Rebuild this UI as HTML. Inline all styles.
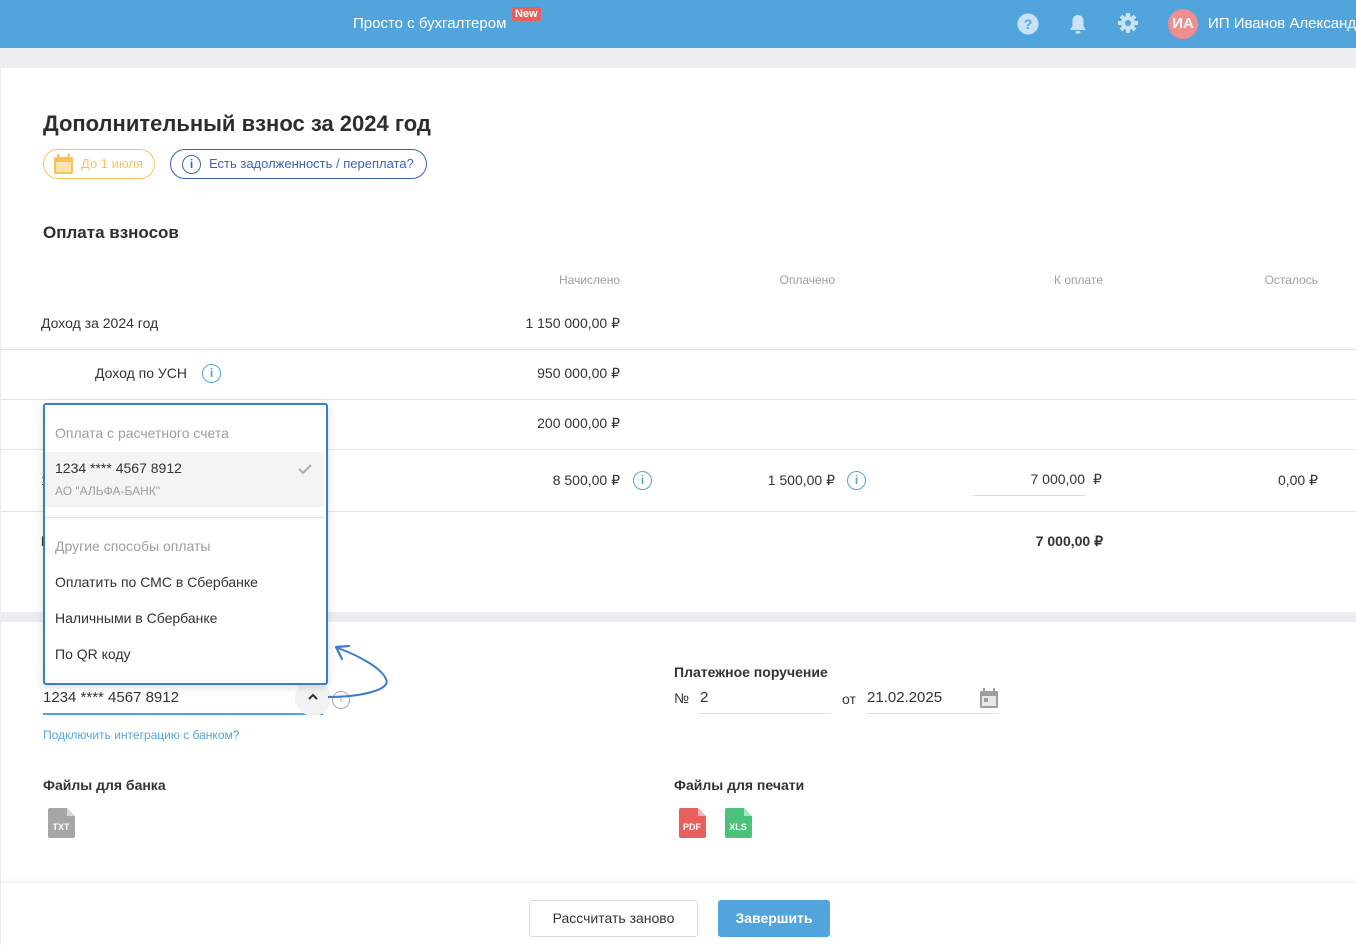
<!DOCTYPE html>
<html><head><meta charset="utf-8"><style>
*{box-sizing:border-box;margin:0;padding:0}
body{width:1356px;height:945px;overflow:hidden;background:#ebeef1;font-family:"Liberation Sans",sans-serif;color:#333;position:relative;font-size:14px}
.a{position:absolute;white-space:nowrap}
.hdr{position:absolute;left:0;top:0;width:1356px;height:48px;background:#52a5dc}
.panel{position:absolute;left:1px;background:#fff;width:1355px}
.line{position:absolute;left:1px;width:1355px;height:1px;background:#e2e2e2}
.r{text-align:right}
.th{color:#9e9e9e;font-size:12px}
.info{position:absolute;width:19px;height:19px;border:1.6px solid #52a5dc;border-radius:50%;color:#52a5dc;font-size:12px;font-weight:bold;text-align:center;line-height:16px}
.lbl{font-weight:bold;font-size:14px;color:#333}
</style></head><body>
<div class="hdr"></div>
<div class="a" style="left:353px;top:15px;color:#fff;font-size:15px">Просто с бухгалтером</div>
<div class="a" style="left:512px;top:7px;background:#e8605c;color:#fff;font-size:11px;padding:1px 3px;border-radius:2px;font-weight:bold">New</div>
<svg class="a" style="left:1017px;top:13px" width="22" height="22" viewBox="0 0 22 22"><circle cx="11" cy="11" r="10.5" fill="#c9e3f6"/><text x="11" y="16" fill="#52a5dc" font-size="14" font-weight="bold" text-anchor="middle" font-family="Liberation Sans">?</text></svg>
<svg class="a" style="left:1068px;top:13px" width="20" height="22" viewBox="0 0 20 22"><path d="M10 2c-3.5 0-5.5 2.5-5.5 6v5L2.5 16v1h15v-1l-2-3V8c0-3.5-2-6-5.5-6z" fill="#c9e3f6"/><rect x="7.5" y="18" width="5" height="2.5" rx="1.2" fill="#c9e3f6"/></svg>
<svg class="a" style="left:1117px;top:12px" width="22" height="22" viewBox="0 0 22 22"><g fill="#c9e3f6"><circle cx="11" cy="11" r="7"/><g stroke="#c9e3f6" stroke-width="4"><path d="M11 1v20M1 11h20M4 4l14 14M18 4L4 18"/></g></g><circle cx="11" cy="11" r="3" fill="#52a5dc"/></svg>
<div class="a" style="left:1168px;top:9px;width:30px;height:30px;border-radius:50%;background:#ef8d8f;color:#fff;font-weight:bold;font-size:15px;text-align:center;line-height:30px">ИА</div>
<div class="a" style="left:1208px;top:15px;color:#fff;font-size:15px">ИП Иванов Александр</div>

<div class="panel" style="top:68px;height:544px"></div>
<div class="panel" style="top:622px;height:260px"></div>
<div class="panel" style="top:882px;height:63px;box-shadow:0 -3px 6px rgba(0,0,0,0.04);border-top:1px solid #f0f0f0"></div>

<div class="a" style="left:43px;top:111px;font-size:22px;font-weight:bold;color:#2d2d2d">Дополнительный взнос за 2024 год</div>
<div class="a" style="left:43px;top:149px;width:112px;height:30px;border:1px solid #fbc25a;border-radius:15px"></div>
<svg class="a" style="left:54px;top:154px" width="19" height="20" viewBox="0 0 19 20"><rect x="0" y="3" width="19" height="17" rx="1.5" fill="#fbc25a"/><rect x="3" y="0" width="2.5" height="4" fill="#fbc25a"/><rect x="13.5" y="0" width="2.5" height="4" fill="#fbc25a"/><rect x="2" y="8" width="15" height="10" fill="#fde3ae"/></svg>
<div class="a" style="left:81px;top:156px;color:#fbc25a;font-size:13px">До 1 июля</div>
<div class="a" style="left:170px;top:149px;width:257px;height:30px;border:1px solid #3c63b8;border-radius:15px"></div>
<div class="info" style="left:182px;top:155px;border-color:#3c63b8;color:#3c63b8">i</div>
<div class="a" style="left:209px;top:156px;color:#3c63b8;font-size:13px">Есть задолженность / переплата?</div>

<div class="a" style="left:43px;top:223px;font-size:17px;font-weight:bold;color:#2d2d2d">Оплата взносов</div>
<div class="a th r" style="left:420px;width:200px;top:273px">Начислено</div>
<div class="a th r" style="left:635px;width:200px;top:273px">Оплачено</div>
<div class="a th r" style="left:903px;width:200px;top:273px">К оплате</div>
<div class="a th r" style="left:1118px;width:200px;top:273px">Осталось</div>

<div class="a" style="left:41px;top:315px">Доход за 2024 год</div>
<div class="a r" style="left:420px;width:200px;top:315px">1 150 000,00 ₽</div>
<div class="line" style="top:349px"></div>
<div class="a" style="left:95px;top:365px">Доход по УСН</div>
<div class="info" style="left:202px;top:364px">i</div>
<div class="a r" style="left:420px;width:200px;top:365px">950 000,00 ₽</div>
<div class="line" style="top:399px"></div>
<div class="a r" style="left:420px;width:200px;top:415px">200 000,00 ₽</div>
<div class="line" style="top:449px"></div>
<div class="a" style="left:41px;top:472px">1%</div>
<div class="a r" style="left:420px;width:200px;top:472px">8 500,00 ₽</div>
<div class="info" style="left:633px;top:471px">i</div>
<div class="a r" style="left:635px;width:200px;top:472px">1 500,00 ₽</div>
<div class="info" style="left:847px;top:471px">i</div>
<div class="a r" style="left:885px;width:200px;top:471px">7 000,00</div>
<div class="a" style="left:1093px;top:471px">₽</div>
<div class="a" style="left:973px;top:495px;width:112px;height:1px;background:#ddd"></div>
<div class="a r" style="left:1118px;width:200px;top:472px">0,00 ₽</div>
<div class="line" style="top:511px"></div>
<div class="a" style="left:41px;top:533px;font-weight:bold">Итого</div>
<div class="a r" style="left:903px;width:200px;top:533px;font-weight:bold">7 000,00 ₽</div>

<div class="a" style="left:43px;top:689px;font-size:15px">1234 **** 4567 8912</div>
<div class="a" style="left:43px;top:713px;width:280px;height:2px;background:#52a5dc"></div>
<div class="a" style="left:295px;top:680px;width:36px;height:36px;border-radius:50%;background:#f2f2f2"></div>
<svg class="a" style="left:307px;top:693px" width="12" height="8" viewBox="0 0 12 8"><path d="M2 6l4-4 4 4" stroke="#333" stroke-width="2" fill="none"/></svg>
<div class="a" style="left:332px;top:691px;width:18px;height:18px;border:1.5px solid #aaa;border-radius:50%;color:#aaa;font-size:11px;text-align:center;line-height:15px">i</div>
<svg class="a" style="left:320px;top:635px" width="80" height="70" viewBox="0 0 80 70"><path d="M8 62C40 62 72 55 66 44C62 34 42 22 18 13" stroke="#3d7cc9" stroke-width="2" fill="none"/><path d="M16 12L29 11M16 12L22 24" stroke="#3d7cc9" stroke-width="2.2" fill="none" stroke-linecap="round"/></svg>
<div class="a" style="left:43px;top:728px;color:#52a5dc;font-size:12px">Подключить интеграцию с банком?</div>

<div class="a lbl" style="left:674px;top:664px">Платежное поручение</div>
<div class="a" style="left:674px;top:690px">№</div>
<div class="a" style="left:700px;top:689px;font-size:15px">2</div>
<div class="a" style="left:699px;top:713px;width:132px;height:1px;background:#ddd"></div>
<div class="a" style="left:842px;top:691px">от</div>
<div class="a" style="left:867px;top:689px;font-size:15px">21.02.2025</div>
<div class="a" style="left:867px;top:713px;width:132px;height:1px;background:#ddd"></div>
<svg class="a" style="left:980px;top:688px" width="18" height="20" viewBox="0 0 18 20"><rect x="0" y="3" width="18" height="17" rx="1.5" fill="#9e9e9e"/><rect x="3" y="0" width="2" height="4" fill="#9e9e9e"/><rect x="13" y="0" width="2" height="4" fill="#9e9e9e"/><rect x="2" y="8" width="14" height="10" fill="#e8e8e8"/><rect x="4" y="10" width="4" height="4" fill="#9e9e9e"/></svg>

<div class="a lbl" style="left:43px;top:777px">Файлы для банка</div>
<div class="a lbl" style="left:674px;top:777px">Файлы для печати</div>
<svg class="a" style="left:48px;top:808px" width="27" height="30" viewBox="0 0 27 30"><path d="M2 0h17l8 8v20a2 2 0 0 1-2 2H2a2 2 0 0 1-2-2V2a2 2 0 0 1 2-2z" fill="#a6a6a6"/><path d="M19 0l8 8h-8z" fill="#d8d8d8"/><text x="13" y="22" fill="#fff" font-size="9" font-weight="bold" text-anchor="middle" font-family="Liberation Sans">TXT</text></svg>
<svg class="a" style="left:679px;top:808px" width="27" height="30" viewBox="0 0 27 30"><path d="M2 0h17l8 8v20a2 2 0 0 1-2 2H2a2 2 0 0 1-2-2V2a2 2 0 0 1 2-2z" fill="#e8605c"/><path d="M19 0l8 8h-8z" fill="#f5b3b1"/><text x="13" y="22" fill="#fff" font-size="9" font-weight="bold" text-anchor="middle" font-family="Liberation Sans">PDF</text></svg>
<svg class="a" style="left:725px;top:808px" width="27" height="30" viewBox="0 0 27 30"><path d="M2 0h17l8 8v20a2 2 0 0 1-2 2H2a2 2 0 0 1-2-2V2a2 2 0 0 1 2-2z" fill="#4bc27a"/><path d="M19 0l8 8h-8z" fill="#a9e5c0"/><text x="13" y="22" fill="#fff" font-size="9" font-weight="bold" text-anchor="middle" font-family="Liberation Sans">XLS</text></svg>

<div class="a" style="left:529px;top:900px;width:169px;height:37px;border:1px solid #ddd;border-radius:3px;text-align:center;line-height:35px;font-size:14px;background:#fff">Рассчитать заново</div>
<div class="a" style="left:718px;top:900px;width:112px;height:37px;background:#52a5dc;border-radius:3px;text-align:center;line-height:37px;color:#fff;font-weight:bold;font-size:14px">Завершить</div>

<div class="a" style="left:43px;top:403px;width:285px;height:282px;background:#fff;border:2px solid #3d7cc9;border-radius:3px;box-shadow:0 2px 8px rgba(0,0,0,0.15)"></div>
<div class="a" style="left:45px;top:452px;width:279px;height:55px;background:#f4f4f4"></div>
<div class="a" style="left:45px;top:517px;width:279px;height:1px;background:#e0e0e0"></div>
<div class="a" style="left:55px;top:425px;color:#9e9e9e">Оплата с расчетного счета</div>
<div class="a" style="left:55px;top:460px">1234 **** 4567 8912</div>
<div class="a" style="left:55px;top:484px;color:#9e9e9e;font-size:12px">АО "АЛЬФА-БАНК"</div>
<svg class="a" style="left:298px;top:463px" width="14" height="12" viewBox="0 0 14 12"><path d="M1 6l4 4 8-8" stroke="#aaa" stroke-width="2" fill="none"/></svg>
<div class="a" style="left:55px;top:538px;color:#9e9e9e">Другие способы оплаты</div>
<div class="a" style="left:55px;top:574px">Оплатить по СМС в Сбербанке</div>
<div class="a" style="left:55px;top:610px">Наличными в Сбербанке</div>
<div class="a" style="left:55px;top:646px">По QR коду</div>
</body></html>
